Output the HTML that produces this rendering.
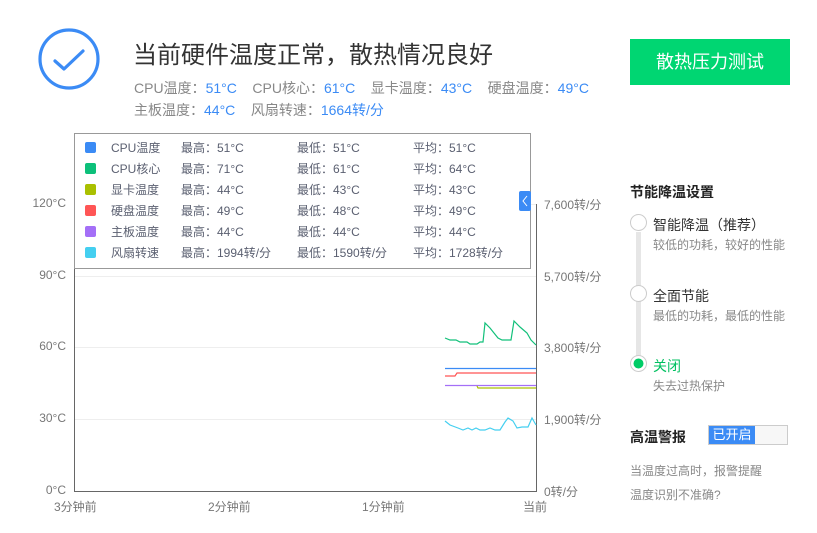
<!DOCTYPE html>
<html><head><meta charset="utf-8"><style>
*{margin:0;padding:0;box-sizing:border-box}
body{width:817px;height:533px;background:#fff;font-family:"Liberation Sans","Noto Sans CJK SC",sans-serif;position:relative;overflow:hidden;color:#333}
.a{position:absolute;white-space:nowrap}
.g{color:#888}.b{color:#3b8bf5}
.lg{font-size:12px;color:#5a5f70}
.ax{font-size:12px;color:#777}
</style></head><body>
<svg class="a" style="left:0;top:0" width="817" height="533">
<circle cx="69" cy="59" r="29" fill="none" stroke="#3b8bf5" stroke-width="3.2"/>
<path d="M55 61 L64 69 L83 51" fill="none" stroke="#3b8bf5" stroke-width="3.2" stroke-linecap="round" stroke-linejoin="round"/>
<g stroke="#eee" stroke-width="1">
<line x1="75" y1="204.5" x2="536" y2="204.5"/><line x1="75" y1="276.5" x2="536" y2="276.5"/>
<line x1="75" y1="347.5" x2="536" y2="347.5"/><line x1="75" y1="419.5" x2="536" y2="419.5"/>
</g>
<line x1="74.5" y1="133" x2="74.5" y2="491" stroke="#666"/>
<line x1="74" y1="491.5" x2="537" y2="491.5" stroke="#666"/>
<line x1="536.5" y1="204" x2="536.5" y2="492" stroke="#666"/>
<polyline fill="none" stroke="#12c07a" stroke-width="1.2" points="445,338 450,340 456,340 460,342 467,342 470,344 477,344 480,342 483,342 485,323 490,328 498,338 502,340 511,340 514,321 520,327 527,333 531,340 536,345"/>
<line x1="445" y1="368.5" x2="536" y2="368.5" stroke="#3b8bf5" stroke-width="1.2"/>
<polyline fill="none" stroke="#f55" stroke-width="1.2" points="445,376 455,376 457,373 536,373"/>
<line x1="445" y1="385.5" x2="536" y2="385.5" stroke="#a46ff7" stroke-width="1.2"/>
<polyline fill="none" stroke="#aac000" stroke-width="1.2" points="477,386 478,388 536,388"/>
<polyline fill="none" stroke="#44cff0" stroke-width="1.2" points="445,421 450,425 458,428 463,430 468,428 472,430 476,428 480,430 485,430 490,428 495,430 500,430 505,422 508,418 513,421 517,428 522,427 528,427 532,418 536,425"/>
<rect x="74.5" y="133.5" width="456" height="135" fill="#fff" stroke="#999"/>
<rect x="85" y="142" width="11" height="11" rx="2" fill="#3b8bf5"/>
<rect x="85" y="163" width="11" height="11" rx="2" fill="#0cc07a"/>
<rect x="85" y="184" width="11" height="11" rx="2" fill="#aac000"/>
<rect x="85" y="205" width="11" height="11" rx="2" fill="#f55"/>
<rect x="85" y="226" width="11" height="11" rx="2" fill="#a46ff7"/>
<rect x="85" y="247" width="11" height="11" rx="2" fill="#44cff0"/>
<rect x="519" y="191" width="12" height="20" rx="2" fill="#3b8bf5"/>
<path d="M527 196 L523 201 L527 206" fill="none" stroke="#fff" stroke-width="1"/>
<line x1="638.5" y1="232" x2="638.5" y2="358" stroke="#e6e6e6" stroke-width="5"/>
<circle cx="638.5" cy="222.5" r="8" fill="#fff" stroke="#ccc"/>
<circle cx="638.5" cy="293.5" r="8" fill="#fff" stroke="#ccc"/>
<circle cx="638.5" cy="363.5" r="8" fill="#fff" stroke="#ccc"/>
<circle cx="638.5" cy="363.5" r="5" fill="#00cc66"/>
</svg>
<div class="a" style="left:133px;top:35px;font-size:24px;color:#333">当前硬件温度正常，散热情况良好</div>
<div class="a g" style="left:134px;top:78px;font-size:14px">CPU温度：<span class="b">51°C</span>&nbsp;&nbsp;&nbsp; CPU核心：<span class="b">61°C</span>&nbsp;&nbsp;&nbsp; 显卡温度：<span class="b">43°C</span>&nbsp;&nbsp;&nbsp; 硬盘温度：<span class="b">49°C</span></div>
<div class="a g" style="left:134px;top:100px;font-size:14px">主板温度：<span class="b">44°C</span>&nbsp;&nbsp;&nbsp; 风扇转速：<span class="b">1664转/分</span></div>
<div class="a" style="left:630px;top:39px;width:160px;height:46px;background:#00d672;color:#fff;font-size:18px;line-height:46px;text-align:center">散热压力测试</div>
<div class="a lg" style="left:111px;top:138px;line-height:21px">CPU温度<br>CPU核心<br>显卡温度<br>硬盘温度<br>主板温度<br>风扇转速</div>
<div class="a lg" style="left:181px;top:138px;line-height:21px">最高：51°C<br>最高：71°C<br>最高：44°C<br>最高：49°C<br>最高：44°C<br>最高：1994转/分</div>
<div class="a lg" style="left:297px;top:138px;line-height:21px">最低：51°C<br>最低：61°C<br>最低：43°C<br>最低：48°C<br>最低：44°C<br>最低：1590转/分</div>
<div class="a lg" style="left:413px;top:138px;line-height:21px">平均：51°C<br>平均：64°C<br>平均：43°C<br>平均：49°C<br>平均：44°C<br>平均：1728转/分</div>
<div class="a ax" style="right:751px;top:196px">120°C</div>
<div class="a ax" style="right:751px;top:268px">90°C</div>
<div class="a ax" style="right:751px;top:339px">60°C</div>
<div class="a ax" style="right:751px;top:411px">30°C</div>
<div class="a ax" style="right:751px;top:483px">0°C</div>
<div class="a ax" style="left:544px;top:196px">7,600转/分</div>
<div class="a ax" style="left:544px;top:268px">5,700转/分</div>
<div class="a ax" style="left:544px;top:339px">3,800转/分</div>
<div class="a ax" style="left:544px;top:411px">1,900转/分</div>
<div class="a ax" style="left:544px;top:483px">0转/分</div>
<div class="a ax" style="left:54px;top:498px">3分钟前</div>
<div class="a ax" style="left:208px;top:498px">2分钟前</div>
<div class="a ax" style="left:362px;top:498px">1分钟前</div>
<div class="a ax" style="left:523px;top:498px">当前</div>
<div class="a" style="left:630px;top:182px;font-size:14px;font-weight:bold;color:#222">节能降温设置</div>
<div class="a" style="left:653px;top:215px;font-size:14px;color:#333">智能降温（推荐）</div>
<div class="a g" style="left:653px;top:236px;font-size:12px">较低的功耗，较好的性能</div>
<div class="a" style="left:653px;top:286px;font-size:14px;color:#333">全面节能</div>
<div class="a g" style="left:653px;top:307px;font-size:12px">最低的功耗，最低的性能</div>
<div class="a" style="left:653px;top:356px;font-size:14px;color:#00c060">关闭</div>
<div class="a g" style="left:653px;top:377px;font-size:12px">失去过热保护</div>
<div class="a" style="left:630px;top:427px;font-size:14px;font-weight:bold;color:#222">高温警报</div>
<div class="a" style="left:708px;top:425px;width:80px;height:20px;border:1px solid #ccc;background:#f7f7f7"><div style="width:46px;height:18px;background:#3b8bf5;color:#fff;font-size:13px;line-height:18px;text-align:center">已开启</div></div>
<div class="a g" style="left:630px;top:462px;font-size:12px">当温度过高时，报警提醒</div>
<div class="a g" style="left:630px;top:486px;font-size:12px">温度识别不准确?</div>
</body></html>
